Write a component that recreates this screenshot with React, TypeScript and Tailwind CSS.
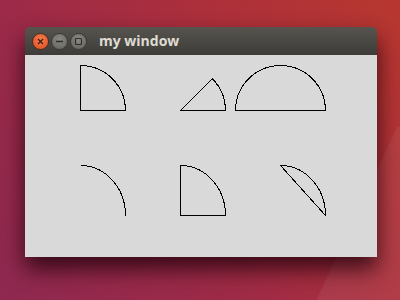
import React from "react";

export default function App() {
  return (
    <div className="w-[400px] h-[300px] overflow-hidden relative bg-[linear-gradient(55deg,#8e2850_0%,#9c2a48_35%,#ab2f3c_65%,#b8372f_100%)]">
      <div className="absolute right-[-60px] bottom-[-40px] w-[110px] h-[200px] rotate-[25deg] bg-[#ffffff10]" />
      <div className="relative ml-[25px] pt-[27px] w-[352px]">
        <div className="w-[352px] h-[230px] flex flex-col rounded-t-[5px] overflow-hidden shadow-[0_12px_22px_rgba(30,0,10,0.8)]">
          <div className="h-[28px] flex items-center bg-[linear-gradient(#57544f,#3d3c38)] pl-[7px]">
            <div className="flex gap-[2px] items-center mt-[1px]">
              <div className="w-[17px] h-[17px] rounded-full bg-[radial-gradient(circle_at_50%_35%,#f47a4a,#de4f22)] border border-[#4a2c20] flex items-center justify-center">
                <svg width="9" height="9" viewBox="0 0 9 9">
                  <path d="M2 2 L7 7 M7 2 L2 7" stroke="#3b1f14" strokeWidth="1.3" />
                </svg>
              </div>
              <div className="w-[17px] h-[17px] rounded-full bg-[radial-gradient(circle_at_50%_35%,#8a8882,#63615c)] border border-[#3a3935] flex items-center justify-center">
                <svg width="9" height="9" viewBox="0 0 9 9">
                  <path d="M1 4.5 L8 4.5" stroke="#2f2e2a" strokeWidth="1.3" />
                </svg>
              </div>
              <div className="w-[17px] h-[17px] rounded-full bg-[radial-gradient(circle_at_50%_35%,#8a8882,#63615c)] border border-[#3a3935] flex items-center justify-center">
                <svg width="9" height="9" viewBox="0 0 9 9">
                  <rect x="1.5" y="1.5" width="6" height="6" rx="1" fill="none" stroke="#2f2e2a" strokeWidth="1.2" />
                </svg>
              </div>
            </div>
            <div className="ml-[12px] text-[14px] font-bold text-[#dfdbd2] font-['Open_Sans',sans-serif] leading-none mt-[-1px]">
              my window
            </div>
          </div>
          <div className="flex-1 bg-[#d9d9d9]">
            <svg width="352" height="202" viewBox="0 0 352 202" fill="none" stroke="#000" strokeWidth="1" shapeRendering="crispEdges">
              <path d="M55.5 10.5 L55.5 55.5 L100.5 55.5 A45 45 0 0 0 55.5 10.5 Z" />
              <path d="M155.5 55.5 L200.5 55.5 A45 45 0 0 0 187.3 23.7 Z" />
              <path d="M210.5 55.5 L300.5 55.5 A45 45 0 1 0 210.5 55.5 Z" />
              <path d="M55.5 110.5 A45 50 0 0 1 100.5 160.5" />
              <path d="M155.5 110.5 L155.5 160.5 L200.5 160.5 A45 50 0 0 0 155.5 110.5 Z" />
              <path d="M255.5 110.5 A45 50 0 0 1 300.5 160.5 Z" />
            </svg>
          </div>
        </div>
      </div>
    </div>
  );
}
